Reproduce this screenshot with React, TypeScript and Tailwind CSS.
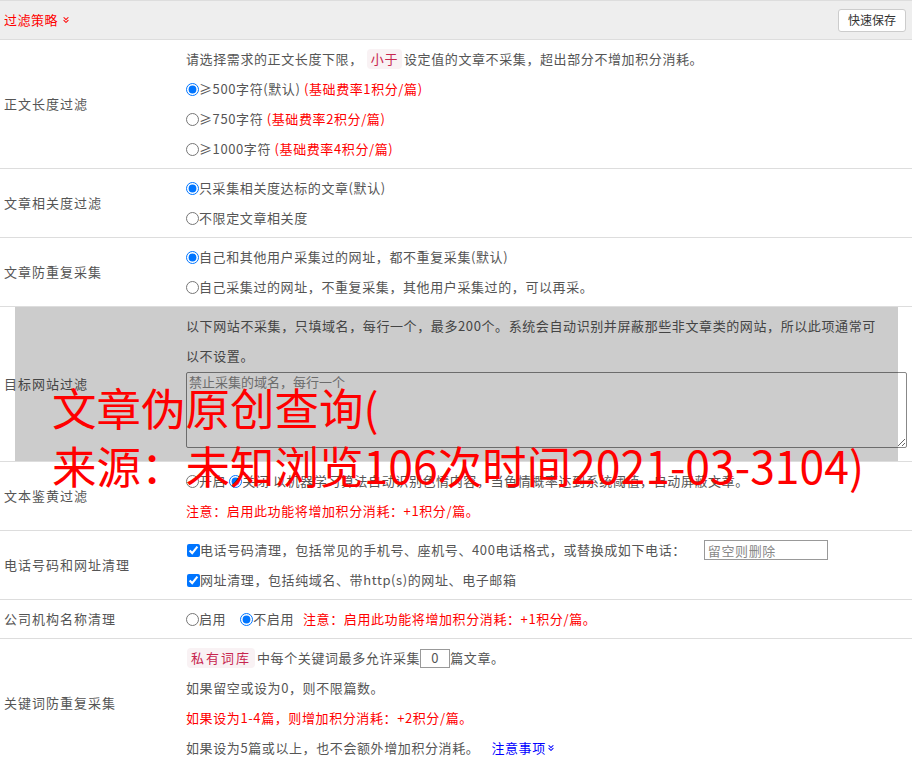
import { ChevronsDown } from "lucide-react";
import type { ReactNode } from "react";

const font = { fontFamily: '"Noto Sans CJK SC", "Noto Sans", sans-serif' };

function Row({
  label,
  children,
  className = "",
}: {
  label: string;
  children: ReactNode;
  className?: string;
}) {
  return (
    <div className={`flex border-b border-[#ddd] ${className}`}>
      <div className="flex w-[186px] shrink-0 items-center pl-1 tracking-[1px] text-[#555]">
        {label}
      </div>
      <div className="flex-1 py-1 tracking-[0.6px] text-[#555]">{children}</div>
    </div>
  );
}

// one 30px line of the content column
function Line({ children, className = "" }: { children: ReactNode; className?: string }) {
  return <div className={`flex h-[30px] items-center whitespace-pre ${className}`}>{children}</div>;
}

function Radio({ checked = false, label }: { checked?: boolean; label: ReactNode }) {
  return (
    <label className="flex items-center">
      <input
        type="radio"
        defaultChecked={checked}
        className="m-0 h-[13px] w-[13px] accent-[#0075ff]"
      />
      <span>{label}</span>
    </label>
  );
}

function Check({ label }: { label: ReactNode }) {
  return (
    <label className="flex items-center">
      <input
        type="checkbox"
        defaultChecked
        className="m-0 ml-px h-[13px] w-[13px] accent-[#0075ff]"
      />
      <span>{label}</span>
    </label>
  );
}

function Code({ children, className = "" }: { children: ReactNode; className?: string }) {
  return (
    <span
      className={`rounded bg-[#f9f2f4] px-[4px] leading-[20px] text-[#c7254e] ${className}`}
    >
      {children}
    </span>
  );
}

export default function App() {
  return (
    <div className="relative h-[768px] overflow-hidden bg-white text-[13px]" style={font}>
      {/* header */}
      <div className="flex h-10 items-center justify-between border-y border-[#ddd] bg-[#eee] pl-1 pr-[6px]">
        <div className="flex items-center tracking-[0.5px] text-[#f00]">
          过滤策略
          <ChevronsDown className="ml-[3px] h-[10px] w-[10px]" strokeWidth={2.5} />
        </div>
        <button className="h-[23px] rounded-[3px] border border-[#ccc] bg-white px-[9px] text-[12px] text-[#333]">
          快速保存
        </button>
      </div>

      <Row label="正文长度过滤">
        <Line>
          请选择需求的正文长度下限，
          <Code className="ml-[4px] mr-[2px]">小于</Code>
          设定值的文章不采集，超出部分不增加积分消耗。
        </Line>
        <Line>
          <Radio
            checked
            label={
              <>
                ≥500字符(默认) <span className="text-[#f00]">(基础费率1积分/篇)</span>
              </>
            }
          />
        </Line>
        <Line>
          <Radio
            label={
              <>
                ≥750字符 <span className="text-[#f00]">(基础费率2积分/篇)</span>
              </>
            }
          />
        </Line>
        <Line>
          <Radio
            label={
              <>
                ≥1000字符 <span className="text-[#f00]">(基础费率4积分/篇)</span>
              </>
            }
          />
        </Line>
      </Row>

      <Row label="文章相关度过滤">
        <Line>
          <Radio checked label="只采集相关度达标的文章(默认)" />
        </Line>
        <Line>
          <Radio label="不限定文章相关度" />
        </Line>
      </Row>

      <Row label="文章防重复采集">
        <Line>
          <Radio checked label="自己和其他用户采集过的网址，都不重复采集(默认)" />
        </Line>
        <Line>
          <Radio label="自己采集过的网址，不重复采集，其他用户采集过的，可以再采。" />
        </Line>
      </Row>

      <div className="relative">
        <Row label="目标网站过滤">
          <div className="w-[700px] leading-[30px]">
            以下网站不采集，只填域名，每行一个，最多200个。系统会自动识别并屏蔽那些非文章类的网站，所以此项通常可以不设置。
          </div>
          <textarea
            placeholder="禁止采集的域名，每行一个"
            className="mb-[9px] mt-px block h-[76px] w-[721px] rounded-[2px] border border-[#888] px-[2px] py-0 text-[13px] leading-[18px] tracking-normal text-[#555] placeholder:text-[#888]"
          />
        </Row>
        <div className="pointer-events-none absolute bottom-[1px] left-[15px] top-0 w-[883px] bg-black/20" />
      </div>

      <Row label="文本鉴黄过滤">
        <Line>
          <Radio label="开启" />
          <span className="ml-[3px]">
            <Radio
              checked
              label="关闭 以机器学习算法自动识别色情内容，当色情概率达到系统阈值，自动屏蔽文章。"
            />
          </span>
        </Line>
        <Line className="text-[#f00]">注意：启用此功能将增加积分消耗：+1积分/篇。</Line>
      </Row>

      <Row label="电话号码和网址清理">
        <Line>
          <Check label="电话号码清理，包括常见的手机号、座机号、400电话格式，或替换成如下电话：" />
          <input
            placeholder="留空则删除"
            className="ml-[18px] h-[20px] w-[124px] border border-[#999] px-[3px] text-[13px] placeholder:text-[#888]"
          />
        </Line>
        <Line>
          <Check label="网址清理，包括纯域名、带http(s)的网址、电子邮箱" />
        </Line>
      </Row>

      <Row label="公司机构名称清理">
        <Line>
          <Radio label="启用" />
          <span className="ml-[14px]">
            <Radio checked label="不启用" />
          </span>
          <span className="ml-[9px] text-[#f00]">注意：启用此功能将增加积分消耗：+1积分/篇。</span>
        </Line>
      </Row>

      <Row label="关键词防重复采集" className="border-b-0">
        <Line>
          <Code className="ml-px mr-[2px] tracking-[2px]">私有词库</Code>
          中每个关键词最多允许采集
          <input
            defaultValue="0"
            className="h-[19px] w-[30px] border border-[#999] text-center text-[13px] text-[#555]"
          />
          篇文章。
        </Line>
        <Line>如果留空或设为0，则不限篇数。</Line>
        <Line className="text-[#f00]">如果设为1-4篇，则增加积分消耗：+2积分/篇。</Line>
        <Line>
          如果设为5篇或以上，也不会额外增加积分消耗。
          <span className="ml-3 flex items-center text-[#00f]">
            注意事项
            <ChevronsDown className="h-[10px] w-[10px]" strokeWidth={2.5} />
          </span>
        </Line>
      </Row>

      {/* watermark overlay */}
      <div className="pointer-events-none absolute left-[52px] top-[378px] text-[44.5px] leading-[58px] text-[#f00]">
        文章伪原创查询(
        <br />
        来源：未知浏览106次时间2021-03-3104)
      </div>
    </div>
  );
}
